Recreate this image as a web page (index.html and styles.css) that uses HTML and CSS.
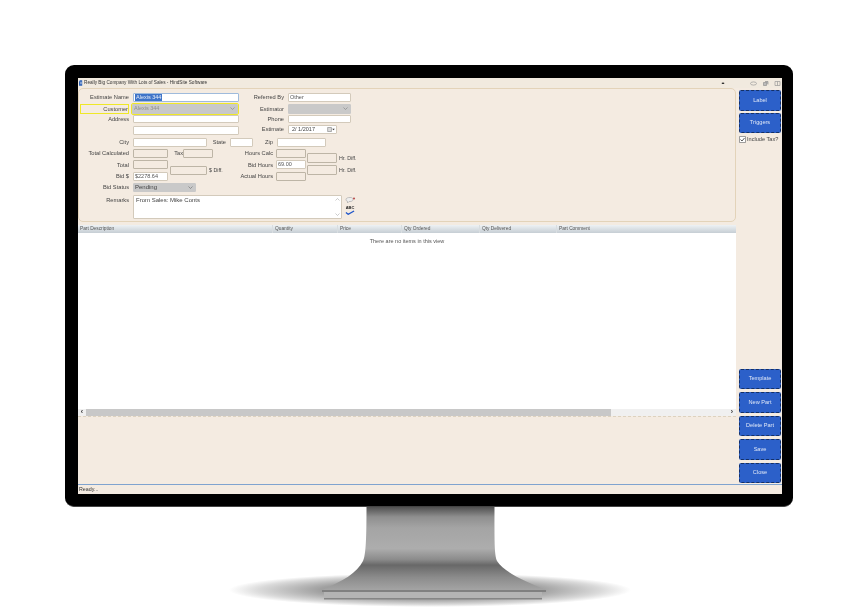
FILE: index.html
```html
<!DOCTYPE html>
<html lang="en">
<head>
<meta charset="utf-8">
<title>Estimate</title>
<link rel="stylesheet" href="styles.css">
</head>
<body>
<div class="stage">
  <div class="monitor">
    <div class="screen">
      <div class="titlebar">
        <svg class="app-icon" viewBox="0 0 5 7"><path d="M1 0h3v7H0V2z" fill="#2a5fb5"/><path d="M2 2h1v3H2z" fill="#fff"/></svg>
        <span class="title-text">Really Big Company With Lots of Sales - HindSite Software</span>
        <span class="dots">••</span>
        <div class="win-btns">
          <svg viewBox="0 0 7 5"><ellipse cx="3.5" cy="2.5" rx="3" ry="1.6" fill="none" stroke="#999" stroke-width=".7"/></svg>
          <svg viewBox="0 0 7 5"><path d="M1.5 1.5h3v3h-3zM3 .5h3v3" fill="#bbb" stroke="#888" stroke-width=".6"/></svg>
          <svg viewBox="0 0 7 5"><path d="M1 .5h5v4H1zM3.5 .5v4" fill="none" stroke="#999" stroke-width=".7"/></svg>
        </div>
      </div>
      <div class="main">
        <div class="content">
          <div class="form-panel">
            <div class="split">
              <div class="stack col-name">
                <div class="row r1"><span class="lbl w-left">Estimate Name</span><div class="field focus w-name"><span class="sel">Alexis 344</span></div></div>
                <div class="row r2 highlight"><span class="lbl w-left lbl-hl">Customer</span><div class="field select grey w-name">Alexis 344<svg class="chev" viewBox="0 0 5 3"><path d="M.5.5l2 2 2-2" fill="none" stroke="#888" stroke-width=".7"/></svg></div></div>
                <div class="row r3"><span class="lbl w-left">Address</span><div class="field w-name"></div></div>
                <div class="row r4"><span class="lbl w-left"></span><div class="field w-name"></div></div>
              </div>
              <div class="stack col-ref">
                <div class="row r1"><span class="lbl w-ref">Referred By</span><div class="field w-ref-in">Other</div></div>
                <div class="row r2"><span class="lbl w-ref">Estimator</span><div class="field select grey w-ref-in"><svg class="chev" viewBox="0 0 5 3"><path d="M.5.5l2 2 2-2" fill="none" stroke="#888" stroke-width=".7"/></svg></div></div>
                <div class="row r3"><span class="lbl w-ref">Phone</span><div class="field w-ref-in"></div></div>
                <div class="row r4b"><span class="lbl w-ref">Estimate</span><div class="field date">2/ 1/2017<span class="cal"><svg viewBox="0 0 9 6"><path d="M.5.5h4.5v5H.5z" fill="#ddd" stroke="#777" stroke-width=".7"/><path d="M6 2h3L7.500 4z" fill="#333"/></svg></span></div></div>
              </div>
            </div>
            <div class="row city-row">
              <span class="lbl w-left">City</span><div class="field w-city"></div>
              <span class="lbl w-state">State</span><div class="field w-st"></div>
              <span class="lbl w-zip">Zip</span><div class="field w-zipf"></div>
            </div>
            <div class="figures">
              <div class="stack col-fig">
                <div class="row fr"><span class="lbl w-left">Total Calculated</span><div class="field off w-fig"></div><span class="lbl w-tax">Tax</span><div class="field off w-taxf"></div></div>
                <div class="row fr2"><span class="lbl w-left">Total</span><div class="field off w-fig"></div></div>
                <div class="row fr2"><span class="lbl w-left">Bid $</span><div class="field w-fig">$2278.64</div></div>
              </div>
              <div class="row dollar-diff"><div class="field off w-diff"></div><span class="note">$ Diff.</span></div>
              <div class="stack col-hours">
                <div class="row fr"><span class="lbl w-hours">Hours Calc</span><div class="field off w-hr"></div></div>
                <div class="row fr2"><span class="lbl w-hours">Bid Hours</span><div class="field w-hr">69.00</div></div>
                <div class="row fr2"><span class="lbl w-hours">Actual Hours</span><div class="field off w-hr"></div></div>
              </div>
              <div class="stack col-hrdiff">
                <div class="row hd"><div class="field off w-hrd"></div><span class="note">Hr. Diff.</span></div>
                <div class="row hd hd2"><div class="field off w-hrd"></div><span class="note">Hr. Diff.</span></div>
              </div>
            </div>
            <div class="row status-row"><span class="lbl w-left">Bid Status</span><div class="field select grey dark-text w-status">Pending<svg class="chev" viewBox="0 0 5 3"><path d="M.5.5l2 2 2-2" fill="none" stroke="#777" stroke-width=".7"/></svg></div></div>
            <div class="row remarks-row">
              <span class="lbl w-left">Remarks</span>
              <div class="field remarks">From Sales: Mike Conts<span class="mini-scroll"><svg viewBox="0 0 5 3"><path d="M.5 2.500l2-2 2 2" fill="none" stroke="#aaa" stroke-width=".6"/></svg><svg viewBox="0 0 5 3"><path d="M.5.5l2 2 2-2" fill="none" stroke="#aaa" stroke-width=".6"/></svg></span></div>
              <div class="tools">
                <svg class="tool" viewBox="0 0 11 8"><path d="M1 3.500C1 2 3 1.500 5 1.500s3 .5 3 2-1.500 2-3 2H4L2.500 7V5.300C1.500 5 1 4.500 1 3.500z" fill="#eee" stroke="#aaa" stroke-width=".7"/><circle cx="9" cy="2.500" r="1.100" fill="#b55"/></svg>
                <div class="spell"><span>ABC</span><svg viewBox="0 0 11 5"><path d="M1 2.500l2.500 2L10 .8" fill="none" stroke="#1f55c9" stroke-width="1.400"/></svg></div>
              </div>
            </div>
          </div>
          <div class="grid-view">
            <div class="grid-head">
              <span>Part Description</span><span>Quantity</span><span>Price</span><span>Qty Ordered</span><span>Qty Delivered</span><span>Part Comment</span>
            </div>
            <div class="grid-body">There are no items in this view</div>
            <div class="hscroll">
              <span class="arrow">‹</span>
              <div class="thumb"></div>
              <div class="track"></div>
              <span class="arrow">›</span>
            </div>
          </div>
        </div>
        <div class="side">
          <button class="btn">Label</button>
          <button class="btn">Triggers</button>
          <div class="check-row">
            <svg class="check" viewBox="0 0 7 7"><path d="M.5.500h6v6h-6z" fill="#fff" stroke="#777" stroke-width=".7"/><path d="M1.500 3.500l1.500 1.500 2.500-3" fill="none" stroke="#333" stroke-width=".8"/></svg>
            <span>Include Tax?</span>
          </div>
          <div class="side-bottom">
            <button class="btn">Template</button>
            <button class="btn">New Part</button>
            <button class="btn">Delete Part</button>
            <button class="btn">Save</button>
            <button class="btn">Close</button>
          </div>
        </div>
      </div>
      <div class="statusbar">Ready...</div>
    </div>
  </div>
  <svg class="stand" viewBox="0 0 860 101" width="860" height="101">
    <defs>
      <radialGradient id="shadow">
        <stop offset="0" stop-color="#666"/>
        <stop offset=".55" stop-color="#a0a0a0"/>
        <stop offset=".85" stop-color="#dadada"/>
        <stop offset="1" stop-color="#fff"/>
      </radialGradient>
      <linearGradient id="neck" x1="0" y1="0" x2="0" y2="1">
        <stop offset="0" stop-color="#505050"/>
        <stop offset=".12" stop-color="#8f8f8f"/>
        <stop offset=".25" stop-color="#a4a4a4"/>
        <stop offset=".5" stop-color="#adadad"/>
        <stop offset=".63" stop-color="#8c8c8c"/>
        <stop offset=".7" stop-color="#686868"/>
        <stop offset=".85" stop-color="#8c8c8c"/>
        <stop offset="1" stop-color="#a4a4a4"/>
      </linearGradient>
    </defs>
    <ellipse cx="430" cy="83" rx="201" ry="17" fill="url(#shadow)"/>
    <path d="M366.500 0H494.500C494.500 30 494 48 497 54C505 66 525 74 546 83H322C343 74 357 66 363 54C366 48 366.500 30 366.500 0Z" fill="url(#neck)"/>
    <path d="M322 83H546V85H322Z" fill="#808080"/>
    <path d="M324 85H542V91H324Z" fill="#b4b4b4"/>
    <path d="M324 91H542V92.500H324Z" fill="#858585"/>
  </svg>
</div>
</body>
</html>
```
FILE: styles.css
```css
* { box-sizing: border-box; }
html, body { margin: 0; padding: 0; background: #fff; }
body { width: 860px; height: 608px; overflow: hidden; font-family: "Liberation Sans", Arial, sans-serif; }

.stage { width: 860px; padding-top: 65px; }
.monitor {
  width: 728px; height: 442px; margin-left: 65px;
  padding: 13px 11px 13px 13px;
  background: #000; border-radius: 9px;
  border-bottom: 1px solid #444;
}
.stand { display: block; }

.screen {
  height: 416px; display: flex; flex-direction: column;
  background: #f4ebe1; color: #444; font-size: 5.7px; line-height: 10px;
  filter: blur(.35px);
}

.titlebar { height: 10px; flex: none; display: flex; align-items: center; background: #f1eadf; font-size: 4.7px; padding-left: 1px; }
.app-icon { width: 4px; height: 6px; margin-right: 1px; }
.title-text { color: #333; }
.dots { margin-left: auto; margin-right: 26px; font-size: 5px; color: #222; letter-spacing: -.5px; }
.win-btns { display: flex; gap: 5px; margin-right: 1px; }
.win-btns svg { width: 7px; height: 5px; }

.main { flex: 1; display: flex; min-height: 0; }
.content { width: 658px; flex: none; }

.form-panel {
  height: 134px; padding-top: 3.500px;
  border: 1px solid #e3d3b9; border-radius: 5px; background: #f4ebe1;
}
.split { display: flex; }
.stack { display: flex; flex-direction: column; }
.col-name { width: 161px; }
.row { display: flex; align-items: center; flex: none; }

.r1 { height: 9px; }
.r2 { height: 10px; margin-top: 2px; }
.r3 { height: 8px; margin-top: 1px; }
.r4 { height: 9px; margin-top: 3px; }
.r4b { height: 9px; margin-top: 2px; }

.lbl { display: block; text-align: right; white-space: nowrap; color: #444; }
.w-left { width: 50px; margin-right: 4px; }
.highlight { position: relative; }
.lbl-hl { height: 10px; margin-left: 1px; width: 49px; margin-right: 3px; padding-right: 0; border: 1px solid #efe826; line-height: 8px; }
.w-ref { width: 44px; margin-right: 4px; }
.w-state { width: 19px; margin-right: 4px; }
.w-zip { width: 20px; margin-right: 4px; }
.w-tax { width: 15px; }
.w-hours { width: 34px; margin-right: 3px; }

.field {
  position: relative; height: 100%;
  background: #fff; border: 1px solid #d3cabb; border-radius: 1px;
  padding-left: 1px; line-height: 7px; font-size: 5.5px; color: #555; white-space: nowrap; flex: none;
}
.focus { border-color: #9fbbdc; }
.sel { background: #3f74c8; color: #e8eef8; padding: 0 1px; display: inline-block; height: 7px; }
.select { display: flex; align-items: center; }
.grey { background: #c9c9c9; border-color: #c9c9c9; color: #8f8f8f; }
.highlight .grey { outline: 1px solid #efe826; outline-offset: 0; border-color: #c9c9c9; width: 106px; }
.dark-text { color: #444; font-size: 6px; }
.chev { margin-left: auto; margin-right: 2px; width: 5px; height: 3px; flex: none; }
.off { background: #f4ebe1; border-color: #bdb5a6; }

.w-name { width: 106px; }
.w-ref-in { width: 63px; }
.date { width: 49px; display: flex; align-items: center; padding-left: 3px; color: #444; border-color: #d3cabb; }
.cal { margin-left: auto; margin-right: 1px; display: flex; }
.cal svg { width: 8px; height: 5px; }

.city-row { height: 9px; margin-top: 3px; }
.w-city { width: 74px; }
.w-st { width: 23px; }
.w-zipf { width: 49px; }

.figures { display: flex; margin-top: 2px; height: 33px; }
.col-fig { width: 135px; }
.fr { height: 9px; }
.fr2 { height: 9px; margin-top: 2.500px; }
.w-fig { width: 35px; }
.w-taxf { width: 30px; }
.dollar-diff { margin-left: -44px; margin-top: 17px; height: 9px; width: 61px; align-self: flex-start; }
.w-diff { width: 37px; }
.note { margin-left: 2px; font-size: 5.300px; white-space: nowrap; }
.col-hours { margin-left: 8px; width: 68px; }
.w-hr { width: 30px; }
.col-hrdiff { padding-top: 4.500px; }
.hd { height: 10px; }
.hd2 { margin-top: 2px; }
.w-hrd { width: 30px; }

.status-row { height: 9px; margin-top: 1px; }
.w-status { width: 63px; }
.remarks-row { height: 24px; margin-top: 3px; align-items: flex-start; }
.remarks { width: 209px; padding: 1px 2px; font-size: 6px; color: #444; }
.mini-scroll { position: absolute; right: 1px; top: 2px; bottom: 2px; width: 5px; display: flex; flex-direction: column; justify-content: space-between; align-items: center; }
.mini-scroll svg { width: 5px; height: 3px; }
.tools { display: flex; flex-direction: column; margin-left: 3px; margin-top: 1px; }
.tool { width: 11px; height: 8px; }
.spell { width: 10px; margin-top: 2px; display: flex; flex-direction: column; align-items: center; }
.spell span { font-size: 4px; line-height: 4px; font-weight: bold; color: #222; }
.spell svg { width: 10px; height: 5px; }

.grid-view { margin-top: 3px; height: 192px; display: flex; flex-direction: column; border-bottom: 1px dashed #ddd2bf; }
.grid-head {
  height: 8px; flex: none; display: grid;
  grid-template-columns: 195px 65px 64px 78px 77px 1fr;
  background: linear-gradient(#eef2f4, #c6ced4);
  font-size: 4.800px; line-height: 8px; color: #555;
}
.grid-head span { padding-left: 2px; border-right: 1px solid #d8dde0; white-space: nowrap; }
.grid-head span:last-child { border-right: 0; }
.grid-body { flex: 1; background: #fff; text-align: center; font-size: 5.500px; line-height: 8px; padding-top: 4px; color: #555; }
.hscroll { height: 7px; flex: none; display: flex; background: #f0f0f0; font-size: 7px; line-height: 6px; color: #333; }
.arrow { width: 8px; flex: none; text-align: center; font-weight: bold; }
.thumb { width: 525px; background: #c8c8c8; }
.track { flex: 1; }

.side { flex: 1; display: flex; flex-direction: column; padding: 2px 1px 1px 3px; }
.btn {
  display: block; width: 42px; height: 20.500px; padding: 0;
  background: #2c60c9; color: #dfe7f7;
  border: 1px dashed #143066; border-radius: 2px;
  font-family: inherit; font-size: 5.600px; line-height: 7px;
}
.btn + .btn { margin-top: 2px; }
.check-row { display: flex; align-items: center; height: 8px; margin-top: 2px; font-size: 5.600px; color: #444; white-space: nowrap; }
.check { width: 7px; height: 7px; margin-right: 1px; flex: none; }
.side-bottom { margin-top: auto; }
.side-bottom .btn + .btn { margin-top: 3px; }

.statusbar { height: 10px; flex: none; border-top: 1px solid #7fa3cf; font-size: 5.300px; line-height: 8px; padding-left: 1px; color: #333; }
```
